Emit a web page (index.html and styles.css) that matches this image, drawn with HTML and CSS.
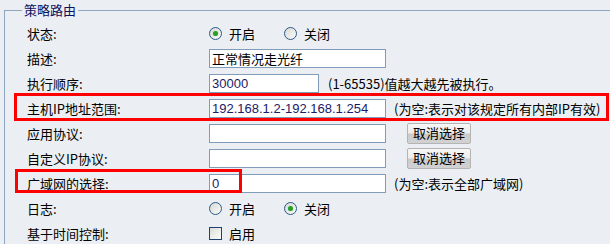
FILE: index.html
```html
<!doctype html>
<html>
<head>
<meta charset="utf-8">
<title>策略路由</title>
<link rel="stylesheet" href="styles.css">
</head>
<body>
<div class="page">
<!--策略路由设置-->
<fieldset class="box">
<legend>策略路由</legend>
<div class="form">
	<div class="lab">状态:</div>
	<div class="val">
		<span class="opt"><span class="radio on"></span>开启</span>
		<span class="opt"><span class="radio"></span>关闭</span>
	</div>

	<div class="lab">描述:</div>
	<div class="val"><span class="txt">正常情况走光纤</span></div>

	<div class="lab">执行顺序:</div>
	<div class="val"><span class="txt short num">30000</span><span class="hint hint-order">(1-65535)值越大越先被执行。</span></div>

	<div class="lab">主机IP地址范围:</div>
	<div class="val"><span class="txt num">192.168.1.2-192.168.1.254</span><span class="hint">(为空:表示对该规定所有内部IP有效)</span></div>

	<div class="lab">应用协议:</div>
	<div class="val"><span class="txt"></span><span class="btn">取消选择</span></div>

	<div class="lab">自定义IP协议:</div>
	<div class="val"><span class="txt"></span><span class="btn">取消选择</span></div>

	<div class="lab">广域网的选择:</div>
	<div class="val"><span class="txt num">0</span><span class="hint">(为空:表示全部广域网)</span></div>

	<div class="lab">日志:</div>
	<div class="val">
		<span class="opt"><span class="radio"></span>开启</span>
		<span class="opt"><span class="radio on"></span>关闭</span>
	</div>

	<div class="lab">基于时间控制:</div>
	<div class="val"><span class="opt"><span class="check"></span>启用</span></div>
</div>
</fieldset>
<!--红框标注-->
<div class="mark mark-ip"></div>
<div class="mark mark-wan"></div>
</div>
</body>
</html>
```

FILE: styles.css
```css
*{
	margin:0;
	padding:0;
	box-sizing:border-box;
}
body
{
	background-color:#ebeff3;
	font-family:"Noto Sans CJK SC","Liberation Sans",sans-serif;
	font-size:13px;
	color:#000;
	overflow:hidden;
}
.page
{
	position:relative;
	width:610px;
	height:244px;
	overflow:hidden;
}
/*外框*/
.box
{
	width:700px;
	margin-left:4px;
	border:1px solid #8ea6c0;
	padding:0 0 10px 17px;
}
.box legend
{
	padding:0 2px;
	line-height:20px;
	color:#10105c;
}
/*表单*/
.form
{
	display:grid;
	grid-template-columns:187px 1fr;
	grid-auto-rows:25px;
	align-items:center;
	margin-top:1px;
}
.lab
{
	padding-left:5px;
	line-height:16px;
}
.val
{
	display:flex;
	align-items:center;
}
.txt
{
	display:block;
	width:177px;
	height:19px;
	border:1px solid #7f9db9;
	background-color:#fff;
	padding-left:2px;
	line-height:17px;
	white-space:nowrap;
	overflow:hidden;
}
.short
{
	width:110px;
}
.num
{
	font-family:"Liberation Sans",sans-serif;
	color:#1b1b66;
}
.hint
{
	margin-left:8px;
	white-space:nowrap;
}
.hint-order
{
	margin-left:9px;
}
.btn
{
	display:block;
	width:64px;
	height:21px;
	margin-left:21px;
	border:1px solid #b4b4b4;
	border-radius:2px;
	background:linear-gradient(#f7f7f7,#ececec 45%,#cbcbcb 55%,#d2d2d2);
	text-align:center;
	line-height:18px;
}
/*单选和复选*/
.opt
{
	display:flex;
	align-items:center;
	width:75px;
}
.radio
{
	position:relative;
	width:13px;
	height:13px;
	margin-right:7px;
	border:1px solid #2a5a8a;
	border-radius:50%;
	background:linear-gradient(135deg,#d8d8d2,#fbfbfb);
}
.radio.on::after
{
	content:"";
	position:absolute;
	left:3px;
	top:3px;
	width:5px;
	height:5px;
	border-radius:50%;
	background-color:#25a025;
	box-shadow:0 0 1px #8fd08f;
}
.check
{
	width:13px;
	height:13px;
	margin-right:7px;
	border:1px solid #1c4270;
	background:linear-gradient(135deg,#dcdcd6,#fcfcfc);
}
/*红框*/
.mark
{
	position:absolute;
	border:3px solid #f00;
}
.mark-ip
{
	left:14px;
	top:93px;
	width:595px;
	height:28px;
}
.mark-wan
{
	left:15px;
	top:169px;
	width:227px;
	height:24px;
}
```
